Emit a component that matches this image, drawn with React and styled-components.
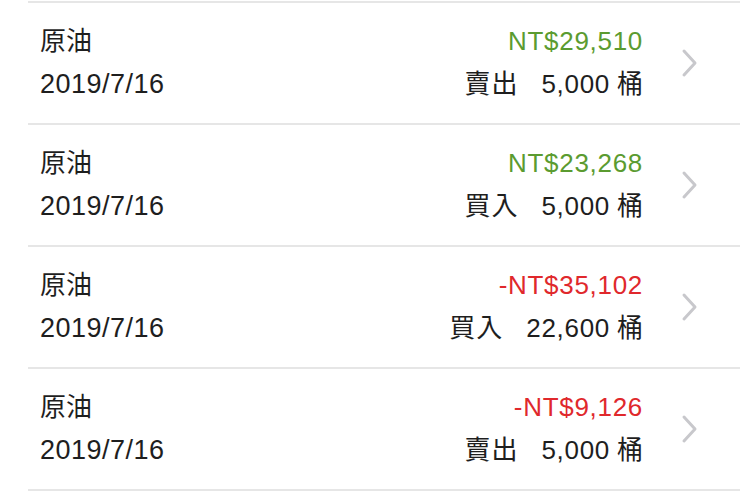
import React from "react";
import styled, { createGlobalStyle } from "styled-components";

const GlobalStyle = createGlobalStyle`
  html, body {
    margin: 0;
    padding: 0;
    background: #ffffff;
  }
  body {
    font-family: "Liberation Sans", "Noto Sans CJK TC", sans-serif;
    color: #1e1e1e;
  }
`;

const Page = styled.div`
  width: 740px;
  height: 492px;
  padding-top: 1px;
  padding-left: 28px;
  box-sizing: border-box;
  overflow: hidden;
  background: #ffffff;
`;

const List = styled.div`
  border-top: 2px solid #e6e6e6;
`;

const Row = styled.div`
  display: flex;
  align-items: center;
  height: 122px;
  box-sizing: border-box;
  border-bottom: 2px solid #e6e6e6;
  padding-left: 12px;
  padding-right: 41px;
  padding-bottom: 1px;
`;

const Left = styled.div`
  flex: 1;
  display: flex;
  flex-direction: column;
  gap: 11px;
`;

const Right = styled.div`
  display: flex;
  flex-direction: column;
  align-items: flex-end;
  gap: 11px;
  margin-right: 38px;
`;

const Title = styled.div`
  font-size: 26px;
  line-height: 32px;
`;

const DateText = styled.div`
  font-size: 27px;
  line-height: 32px;
  letter-spacing: 0.5px;
`;

const Amount = styled.div`
  font-size: 26px;
  line-height: 32px;
  color: ${({ $loss }) => ($loss ? "#e0282c" : "#5b9b30")};
  letter-spacing: 0.7px;
`;

const Trade = styled.div`
  display: flex;
  align-items: baseline;
  font-size: 26px;
  line-height: 32px;
`;

const Side = styled.span`
  letter-spacing: 1px;
  margin-right: 23px;
`;

const Qty = styled.span`
  letter-spacing: 0.7px;
  margin-right: 7px;
`;

const Chevron = () => (
  <svg width="18" height="30" viewBox="0 0 18 30">
    <path
      d="M3 3 L14 15 L3 27"
      fill="none"
      stroke="#c8c8cc"
      strokeWidth="3"
      strokeLinecap="round"
      strokeLinejoin="round"
    />
  </svg>
);

const rows = [
  { amount: "NT$29,510", loss: false, side: "賣出", qty: "5,000" },
  { amount: "NT$23,268", loss: false, side: "買入", qty: "5,000" },
  { amount: "-NT$35,102", loss: true, side: "買入", qty: "22,600" },
  { amount: "-NT$9,126", loss: true, side: "賣出", qty: "5,000" },
];

export default function App() {
  return (
    <>
      <GlobalStyle />
      <Page>
        <List>
          {rows.map((r, i) => (
            <Row key={i}>
              <Left>
                <Title>原油</Title>
                <DateText>2019/7/16</DateText>
              </Left>
              <Right>
                <Amount $loss={r.loss}>{r.amount}</Amount>
                <Trade>
                  <Side>{r.side}</Side>
                  <Qty>{r.qty}</Qty>
                  <span>桶</span>
                </Trade>
              </Right>
              <Chevron />
            </Row>
          ))}
        </List>
      </Page>
    </>
  );
}
